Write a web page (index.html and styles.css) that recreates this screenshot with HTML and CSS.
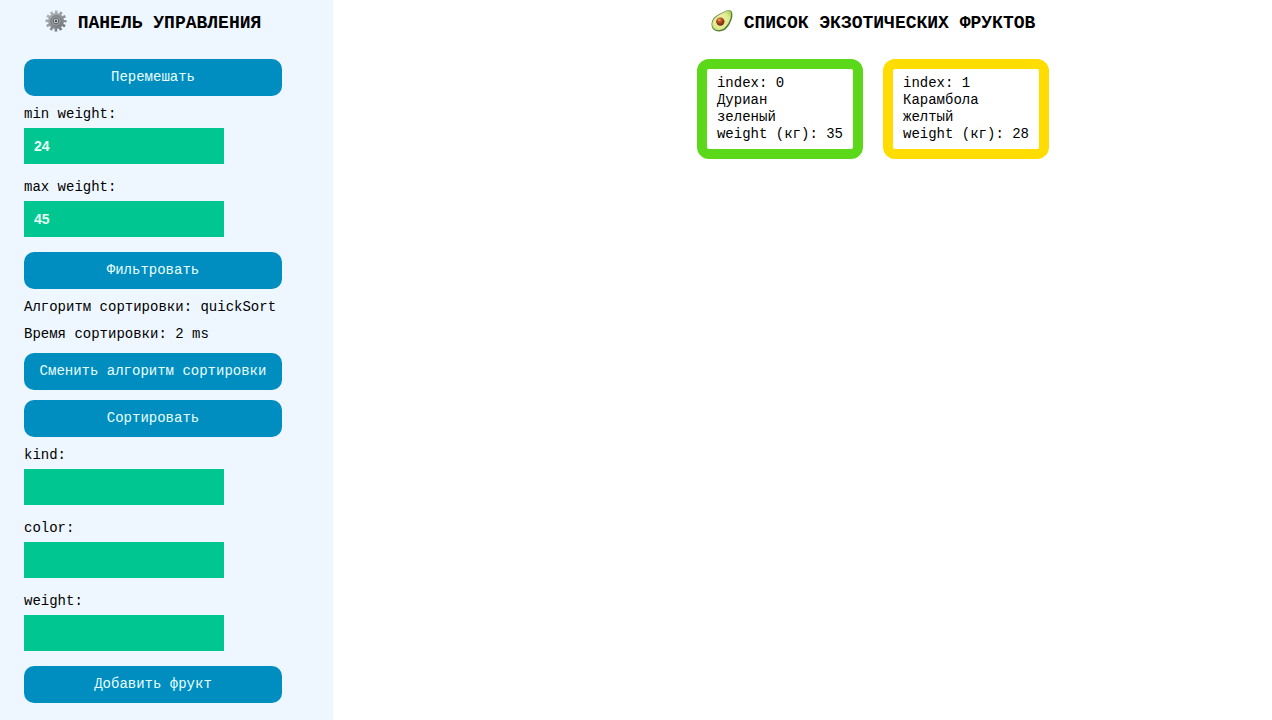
FILE: index.html
```
<!DOCTYPE html>
<html lang="ru">
<head>
<meta charset="utf-8">
<title>Экзотические фрукты</title>
<link rel="stylesheet" href="styles.css">
</head>
<body>
<div class="app">
  <aside class="panel">
    <h1 class="title">
      <svg class="title-icon" viewBox="0 0 22 22" aria-hidden="true">
        <defs>
          <linearGradient id="metal" gradientUnits="userSpaceOnUse" x1="3" y1="2" x2="18" y2="20">
            <stop offset="0" stop-color="#b4babd"/>
            <stop offset="1" stop-color="#6c7276"/>
          </linearGradient>
        </defs>
        <circle cx="11" cy="11" r="9" fill="none" stroke="url(#metal)" stroke-width="3" stroke-dasharray="2.600 2.112" stroke-dashoffset="1.300"/>
        <circle cx="11" cy="11" r="6.500" fill="#92989b" stroke="url(#metal)" stroke-width="3"/>
        <circle cx="11" cy="11" r="5.300" fill="none" stroke="#747a7e" stroke-width="1"/>
        <circle cx="11" cy="11" r="2.800" fill="#cdd2d4" stroke="#5c6266" stroke-width="1"/>
        <circle cx="11" cy="11" r="1.200" fill="#454b50"/>
      </svg>
      ПАНЕЛЬ УПРАВЛЕНИЯ
    </h1>
    <div class="controls">
      <button class="button" type="button">Перемешать</button>
      <div class="field">
        <label for="min-weight">min weight:</label>
        <input class="input" id="min-weight" type="text" inputmode="numeric" value="24">
      </div>
      <div class="field">
        <label for="max-weight">max weight:</label>
        <input class="input" id="max-weight" type="text" inputmode="numeric" value="45">
      </div>
      <button class="button" type="button">Фильтровать</button>
      <p class="info">Алгоритм сортировки: quickSort</p>
      <p class="info">Время сортировки: 2 ms</p>
      <button class="button" type="button">Сменить алгоритм сортировки</button>
      <button class="button" type="button">Сортировать</button>
      <div class="field">
        <label for="kind">kind:</label>
        <input class="input" id="kind" type="text">
      </div>
      <div class="field">
        <label for="color">color:</label>
        <input class="input" id="color" type="text">
      </div>
      <div class="field">
        <label for="weight">weight:</label>
        <input class="input" id="weight" type="text">
      </div>
      <button class="button" type="button">Добавить фрукт</button>
    </div>
  </aside>
  <main class="content">
    <h2 class="title">
      <svg class="title-icon" viewBox="0 0 22 22" aria-hidden="true">
        <defs>
          <radialGradient id="flesh" cx="0.45" cy="0.5" r="0.6">
            <stop offset="0" stop-color="#eef2a4"/>
            <stop offset="0.7" stop-color="#dfeb92"/>
            <stop offset="1" stop-color="#b4d363"/>
          </radialGradient>
          <radialGradient id="stone" cx="0.4" cy="0.3" r="0.7">
            <stop offset="0" stop-color="#d97b3b"/>
            <stop offset="0.5" stop-color="#a8481a"/>
            <stop offset="1" stop-color="#6e290c"/>
          </radialGradient>
        </defs>
        <path d="M19.500 0.600C22 2 21.800 6 20.600 9.500C19.300 13 17.800 16.500 14.500 19.300C10.500 22.400 4.500 22 1.800 18.700C-0.500 15.300 0.500 10.500 3.500 7.300C6.500 4.200 10 3.200 13.500 1.400C15.600 0.300 17.800 -0.200 19.500 0.600Z" fill="#527a30"/>
        <path d="M18.800 0.900C20.700 2 20.600 5.300 19.500 8.500C18.200 12 16.700 15.300 13.500 18C9.800 20.900 4.800 20.800 2.300 17.900C0.300 14.900 1.200 10.700 4 7.900C7 4.900 10.400 3.900 13.800 2C15.800 0.900 17.400 0.200 18.800 0.900Z" fill="url(#flesh)"/>
        <circle cx="9.300" cy="11.600" r="4.200" fill="url(#stone)"/>
        <ellipse cx="8.200" cy="9.900" rx="1.400" ry="0.900" fill="#e8a06b"/>
      </svg>
      СПИСОК ЭКЗОТИЧЕСКИХ ФРУКТОВ
    </h2>
    <ul class="fruits">
      <li class="fruit fruit-green">
        <div>index: 0</div>
        <div>Дуриан</div>
        <div>зеленый</div>
        <div>weight (кг): 35</div>
      </li>
      <li class="fruit fruit-yellow">
        <div>index: 1</div>
        <div>Карамбола</div>
        <div>желтый</div>
        <div>weight (кг): 28</div>
      </li>
    </ul>
  </main>
</div>
</body>
</html>
```
FILE: styles.css
```
* {
  box-sizing: border-box;
}

body {
  margin: 0;
  background: #fff;
  color: #000;
  font-family: "Courier New", "Liberation Mono", monospace;
  font-size: 14px;
  line-height: 17px;
}

.app {
  display: flex;
  min-height: 100vh;
}

.panel {
  flex: 0 0 333px;
  padding: 10px 51px 17px 24px;
  background: #eef7ff;
}

.content {
  flex: 1;
  padding: 10px 0 20px 141px;
}

.title {
  display: flex;
  justify-content: center;
  gap: 11px;
  margin: 0 0 23px;
  font-size: 18px;
  font-weight: 700;
  line-height: 26px;
  white-space: nowrap;
}

.title-icon {
  flex: none;
  width: 22px;
  height: 22px;
}

.controls {
  display: flex;
  flex-direction: column;
  gap: 10px;
}

.button {
  height: 37px;
  padding: 0 10px;
  border: 0;
  border-radius: 10px;
  background: #008dbf;
  color: #e8ffff;
  font: inherit;
  white-space: nowrap;
  cursor: pointer;
}

.field {
  display: flex;
  flex-direction: column;
  align-items: flex-start;
  gap: 5px;
  margin-bottom: 5px;
}

.input {
  width: 200px;
  height: 36px;
  padding: 0 10px;
  border: 0;
  border-radius: 0;
  background: #00c791;
  color: #e8fff5;
  font-family: "Liberation Sans", Arial, sans-serif;
  font-size: 14px;
  font-weight: 700;
}

.info {
  margin: 0;
  white-space: nowrap;
}

.fruits {
  display: flex;
  flex-wrap: wrap;
  justify-content: center;
  gap: 20px;
  margin: 0;
  padding: 0;
  list-style: none;
}

.fruit {
  padding: 6px 10px;
  border: 10px solid;
  border-radius: 12px;
  background: #fff;
}

.fruit div {
  color: #000;
}

.fruit-green {
  border-color: #5bd81a;
}

.fruit-yellow {
  border-color: #ffdd00;
}
```
